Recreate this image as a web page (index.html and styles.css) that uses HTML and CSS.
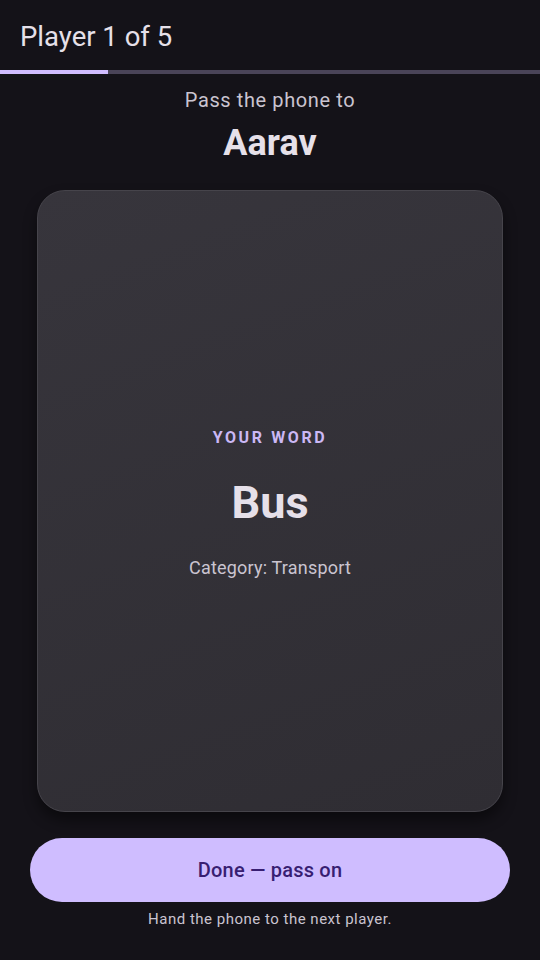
FILE: index.html
```html
<!DOCTYPE html>
<html>
<head>
<meta charset="utf-8">
<link rel="stylesheet" href="styles.css">
</head>
<body>
<div class="screen">
  <header class="appbar">
    <h1 class="title">Player 1 of 5</h1>
  </header>
  <div class="progress"><div class="progress-fill" style="width:20%"></div></div>
  <main class="content">
    <p class="pass">Pass the phone to</p>
    <h2 class="name">Aarav</h2>
    <section class="card">
      <div class="label">YOUR WORD</div>
      <div class="word">Bus</div>
      <div class="category">Category: Transport</div>
    </section>
    <button class="done">Done — pass on</button>
    <p class="hint">Hand the phone to the next player.</p>
  </main>
</div>
</body>
</html>
```
FILE: styles.css
```css
* { box-sizing: border-box; }
html, body { margin: 0; padding: 0; background: #141218; }
body { font-family: Roboto, "Noto Sans", sans-serif; color: #E6E0E9; }
.screen { width: 540px; height: 960px; display: flex; flex-direction: column; }
.appbar { height: 70px; display: flex; align-items: center; padding: 3px 20px 0; }
.title { margin: 0; font-size: 27.5px; font-weight: 400; color: #E6E0E9; line-height: 34px; }
.progress { height: 4px; background: #4A4458; }
.progress-fill { height: 100%; background: #D0BCFF; }
.content { flex: 1; display: flex; flex-direction: column; align-items: stretch; padding: 13px 30px 32px; }
.pass { margin: 0; text-align: center; font-size: 20px; line-height: 26px; color: #CAC4D0; letter-spacing: 0.6px; }
.name { margin: 8px 0 0; text-align: center; font-size: 36px; line-height: 44px; font-weight: 700; color: #E6E0E9; }
.card { flex: 1; margin: 25px 7px 0; border-radius: 28px; border: 1px solid #46444B;
  background: linear-gradient(160deg, #37353C 0%, #2F2D33 100%);
  box-shadow: 0 8px 14px rgba(0,0,0,0.45);
  display: flex; flex-direction: column; align-items: center; justify-content: center; }
.label { font-size: 16px; line-height: 20px; font-weight: 700; letter-spacing: 2.6px; color: #CBB8F5; margin-top: 5px; }
.word { margin-top: 27px; font-size: 45px; line-height: 56px; font-weight: 700; color: #E6E0E9; }
.category { margin-top: 25px; font-size: 18px; line-height: 24px; color: #CAC4D0; letter-spacing: 0.2px; }
.done { margin-top: 26px; height: 64px; border: none; border-radius: 32px; background: #CFBDFF;
  font-family: Roboto, "Noto Sans", sans-serif; font-size: 20px; font-weight: 500; color: #381E72; letter-spacing: 0.2px; }
.hint { margin: 8px 0 0; text-align: center; font-size: 15px; line-height: 18px; color: #CAC4D0; letter-spacing: 0.5px; }
```
